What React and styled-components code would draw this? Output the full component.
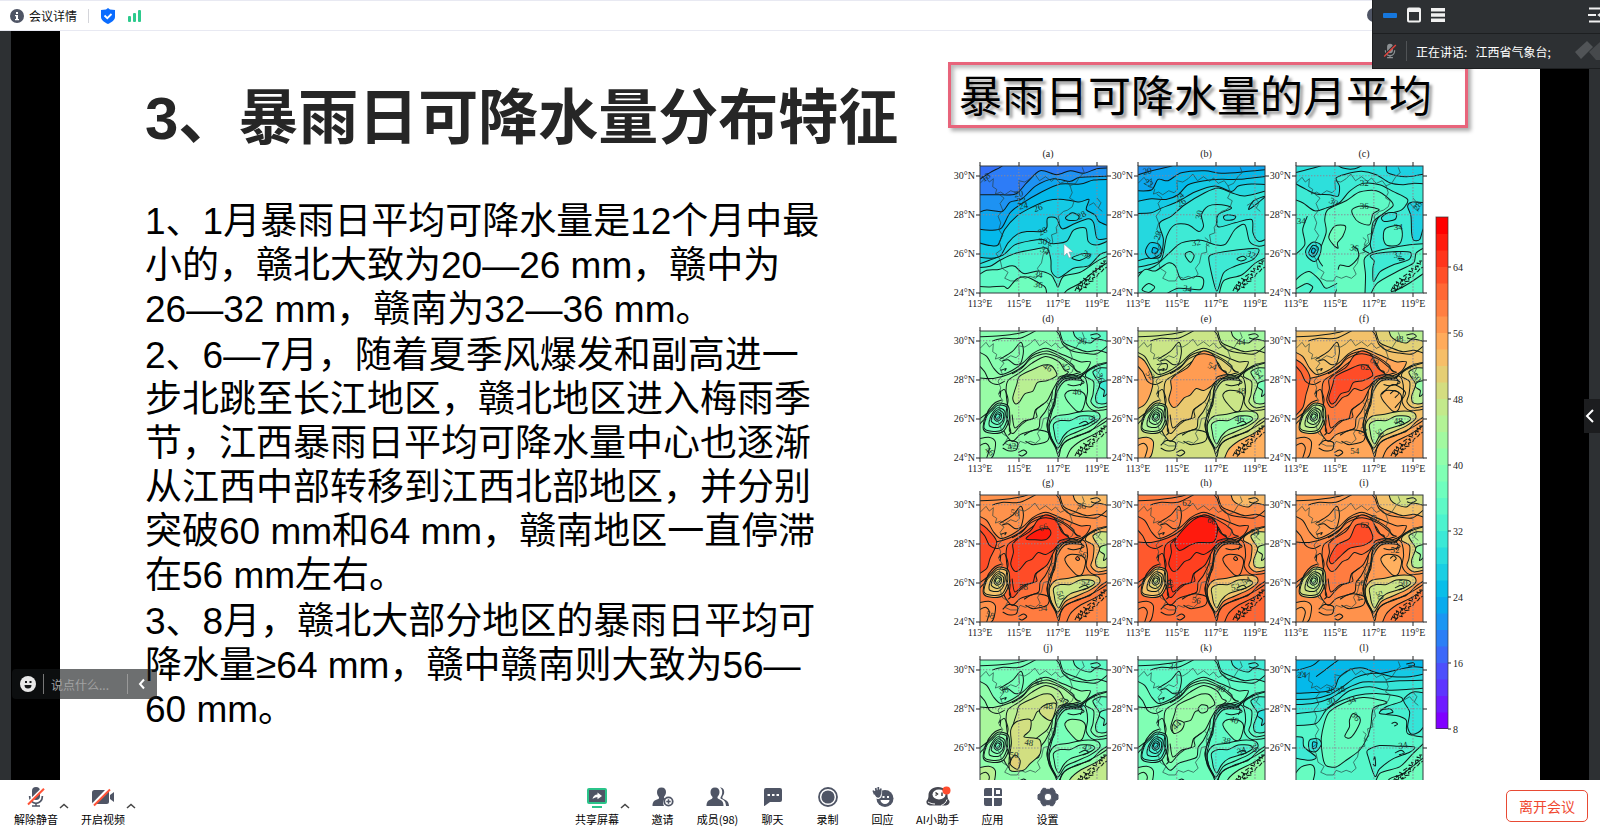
import React from "react";
import styled, { createGlobalStyle } from "styled-components";

const Global = createGlobalStyle`
  * { box-sizing: border-box; }
  body { margin: 0; background: #fff; font-family: "Liberation Sans", "Noto Sans CJK SC", sans-serif; }
  button, input { font: inherit; color: inherit; }
`;

const ui = `"Noto Sans CJK SC", sans-serif`;
const ink = "#4f5565";

const App_ = styled.div`
  position: relative;
  display: flex;
  flex-direction: column;
  height: 100vh;
  overflow: hidden;
  font-family: ${ui};
`;

const Header = styled.header`
  flex: none;
  display: flex;
  align-items: center;
  height: 31px;
  padding: 0 9px;
  border-top: 1px solid #e8e9f2;
  border-bottom: 1px solid #e8e9f2;
  font-size: 12px;
  color: #111;
`;

const PlainButton = styled.button`
  display: flex;
  align-items: center;
  justify-content: center;
  gap: 4px;
  padding: 0;
  border: 0;
  background: none;
  cursor: pointer;
`;

const Rule = styled.span`
  width: 1px;
  height: ${(p) => p.$h}px;
  margin: 0 ${(p) => p.$gap}px;
  background: ${(p) => p.$color};
`;

const HeaderIcons = styled.div`
  display: flex;
  align-items: center;
  gap: 12px;
`;

const HiddenInfo = styled.span`
  position: absolute;
  top: 8px;
  right: 219px;
  width: 14px;
  height: 14px;
  border-radius: 50%;
  background: ${ink};
`;

const Stage = styled.main`
  position: relative;
  flex: 1;
  min-height: 0;
  display: flex;
  padding: 0 11px;
  background: #2d3033;
`;

const Letterbox = styled.div`
  flex: 1;
  min-width: 0;
  display: flex;
  padding: 0 49px;
  background: #000;
`;

const Slide = styled.article`
  flex: 1;
  min-width: 0;
  display: grid;
  grid-template-columns: 3fr 2fr;
  overflow: hidden;
  background: #fff;
`;

const Notes = styled.section`
  padding: 44px 0 0 85px;
  color: #000;
`;

const Title = styled.h1`
  margin: 0;
  font: 700 60px/88px "Liberation Sans", "Noto Sans CJK SC", sans-serif;
  color: #262626;
  white-space: nowrap;
`;

const Points = styled.div`
  display: flex;
  flex-direction: column;
  gap: 2px;
  margin-top: 37px;
  font: 37px/44px "Liberation Sans", "Noto Sans CJK SC", sans-serif;
`;

const Point = styled.p`
  margin: 0;
  white-space: pre;
`;

const Figure = styled.figure`
  margin: 31px 0 0;
`;

const Caption = styled.figcaption`
  width: fit-content;
  height: 66px;
  padding: 0 33px 0 8px;
  border: 3px solid #e8647b;
  box-shadow: 3px 3px 4px #0005, inset 3px 3px 4px #0004;
  font-size: 43px;
  line-height: 56px;
  color: #000;
  text-shadow: 3px 3px 3px #0006;
  white-space: nowrap;
`;

const Chart = styled.svg`
  display: block;
  width: 100%;
  margin-top: 11px;
  font-family: "Liberation Serif", serif;
`;

const ChatBar = styled.form`
  position: absolute;
  left: 12px;
  bottom: 81px;
  display: flex;
  align-items: center;
  width: 145px;
  height: 30px;
  padding: 0 9px 0 8px;
  border-radius: 4px 0 0 4px;
  background: rgba(20, 22, 24, 0.62);
  font-size: 12px;
`;

const ChatInput = styled.input`
  flex: 1;
  min-width: 0;
  padding: 0;
  border: 0;
  outline: 0;
  background: none;
  color: #fff;
  &::placeholder { color: #a2a2a2; }
`;

const SideHandle = styled(PlainButton)`
  position: absolute;
  right: 0;
  top: 368px;
  width: 16px;
  height: 34px;
  padding-right: 4px;
  background: #1c1d1f;
`;

const Toolbar = styled.footer`
  flex: none;
  display: grid;
  grid-template-columns: 1fr auto 1fr;
  height: 52px;
  padding: 0 12px 0 13px;
  background: #fff;
  font-size: 11px;
  color: #000;
`;

const Group = styled.div`
  display: flex;
  align-items: flex-start;
  padding-left: ${(p) => p.$indent || 0}px;
`;

const Pair = styled.div`
  display: flex;
  margin-right: ${(p) => p.$gap}px;
`;

const Tool = styled.button`
  display: flex;
  flex-direction: column;
  align-items: center;
  gap: 3px;
  width: ${(p) => p.$w || 55}px;
  height: 52px;
  padding: 6px 0 0;
  border: 0;
  background: none;
  line-height: 16px;
  white-space: nowrap;
  cursor: pointer;
`;

const Caret = styled(PlainButton)`
  width: 10px;
  height: 52px;
`;

const Leave = styled.button`
  justify-self: end;
  width: 82px;
  height: 32px;
  margin-top: 10px;
  padding: 0;
  border: 1px solid #e84a34;
  border-radius: 5px;
  background: #fff;
  color: #f0482f;
  font-size: 14px;
  line-height: 20px;
  cursor: pointer;
`;

const Speaker = styled.aside`
  position: absolute;
  top: 0;
  right: 0;
  width: 228px;
  height: 69px;
  overflow: hidden;
  border: solid #1d1f21;
  border-width: 0 0 1px 1px;
  background: #2d3033;
  color: #fff;
  font-size: 12px;
`;

const SpeakerTop = styled.div`
  display: flex;
  align-items: center;
  gap: 10px;
  height: 34px;
  padding: 0 0 4px 10px;
  border-bottom: 1px solid #1d1f21;
`;

const Spacer = styled.span`
  flex: 1;
`;

const SpeakerRow = styled.div`
  display: flex;
  align-items: center;
  height: 34px;
  padding-left: 10px;
  white-space: pre;
`;

/* ---------- precipitable water charts ---------- */

const LOW = 8;
const HIGH = 70;

function tone(v) {
  const x = Math.max(0, Math.min(1, (v - LOW) / (HIGH - LOW)));
  const ch = (n) => Math.round(255 * Math.max(0, Math.min(1, n)));
  return `rgb(${ch(Math.abs(2 * x - 0.5))},${ch(Math.sin(Math.PI * x))},${ch(Math.cos((Math.PI * x) / 2))})`;
}

const parse = (s) => s.trim().split(/\s+/).map((p) => p.split(",").map(Number));

function smooth(s, closed) {
  const p = parse(s);
  const n = p.length;
  const at = (i) => (closed ? p[(i + n) % n] : p[Math.max(0, Math.min(n - 1, i))]);
  let d = `M${p[0]}`;
  for (let i = 0; i < (closed ? n : n - 1); i++) {
    const [a, b, c, e] = [at(i - 1), at(i), at(i + 1), at(i + 2)];
    const k = 7;
    d += `C${b[0] + (c[0] - a[0]) / k},${b[1] + (c[1] - a[1]) / k} ${c[0] - (e[0] - b[0]) / k},${c[1] - (e[1] - b[1]) / k} ${c}`;
  }
  return closed ? d + "Z" : d;
}

/* a band is [value, line, corners]; corners "z" closes the loop, none leaves a bare line */
function Band({ band: [value, line, corners] }) {
  const closed = corners === "z";
  const d = smooth(line, closed);
  return (
    <>
      {value != null && <path d={closed ? d : `${d}L${corners.replace(/ /g, "L")}Z`} fill={tone(value)} />}
      <path d={d} fill="none" stroke="#0d1a1a" strokeWidth="3" />
    </>
  );
}

const S = "400,400 -20,400";

const BORDER =
  "0,52 18,34 28,48 40,38 38,62 50,70 46,84 62,78 74,86 92,74 108,80 118,70 116,44 134,48 150,38 164,24 178,44 196,32 214,46 226,36 240,52 258,44 270,60 276,80 268,96 282,104 276,122 262,132 250,136 234,150 238,168 228,184 230,200 214,206 218,228 204,240 206,258 190,262 184,290 172,306 180,324 166,336 150,330 136,336 120,330 112,344 92,344 74,336 84,318 66,306 60,280 48,262 64,250 58,226 68,208 56,190 62,170 54,150 68,132 60,112 72,96 56,84";
const LAKES = "200,214 210,222 204,236 214,240 M268,60 286,52 300,30 312,20 306,4 M326,118 340,110 352,124 M350,96 362,110 354,126 366,136";
const COAST = [
  "284,374 290,362 296,368 292,354 304,360 300,346 312,352 316,342 310,336 324,344 330,332 322,330 334,322 342,328 338,314 350,318 346,306 360,310 356,298 366,302 362,290 374,294 370,284 382,284",
  "296,376 308,362 318,364 314,356 328,352 326,346 340,344 336,336 350,330 354,322 364,316 372,306 382,302",
  "290,366 302,370 308,350 320,356 318,340 332,340",
];

const SHAPE = {
  nw: ["-10,60 20,76 40,110 62,130 96,118 130,94 160,66 200,52 250,72 300,92 330,92 316,120 290,134 262,136 236,150 226,180 224,220 204,262 206,310 226,350 236,376 246,340 284,316 330,300 360,272 394,250", S],
  mid: ["-10,140 40,142 90,128 130,104 156,74 200,60 240,76 276,100 286,118 300,124 272,132 244,140 220,158 214,200 196,240 180,262 176,290 150,300 120,310 96,330 72,300 66,262 56,222 30,240 -10,270", "-20,270"],
  tongue: ["88,298 90,262 82,220 78,178 84,148 120,124 156,96 196,76 236,92 252,116 264,124 236,146 218,176 200,210 168,236 170,258 144,266 118,286 100,306", "z"],
  core: ["106,218 98,200 110,160 118,136 156,116 190,102 214,104 230,132 202,148 172,154 158,180 134,188 118,212", "z"],
  ne: ["236,-10 250,34 284,50 320,62 356,58 392,70", "400,-20"],
  ne2: ["276,-10 284,16 300,28 330,36 350,24 392,34", "400,-20"],
  e1: ["392,92 352,100 326,116 316,136 340,152 338,190 332,212 352,230 392,222", "400,220 400,90"],
  e2: ["392,112 362,110 338,122 346,140 358,160 346,196 352,216 378,216 392,196", "400,200 400,110"],
  e3: ["386,150 362,154 358,168 372,178 370,196 388,178", "z"],
  pocket: ["254,190 270,178 304,182 316,200 306,236 290,240 270,220 258,204", "z"],
  se1: ["208,280 226,256 260,250 312,240 352,244 358,262 330,284 290,302 256,318 234,350 222,336 210,310", "z"],
  se2: ["222,300 220,280 240,268 270,268 300,254 336,256 342,266 318,280 270,296 250,314 236,338 226,322", "z"],
  coast: ["252,400 270,356 300,330 344,308 392,276", "400,400"],
  sw: ["-10,324 26,318 46,332 40,372 20,392", "-20,400"],
};

const WIDE_CORE =
  "104,228 92,206 100,172 98,148 112,132 150,108 172,76 196,60 226,72 244,110 268,132 236,148 220,164 196,178 174,172 156,192 138,200 118,224";

const VORTEX = [
  "54,216 84,224 88,262 70,300 34,306 10,294 16,256 34,234",
  "54,222 80,228 82,262 66,296 34,300 12,290 20,256 36,238",
  "52,230 74,240 72,268 56,288 28,284 32,256",
  "54,236 70,246 68,268 52,280 34,270 40,250",
  "52,242 64,250 62,264 50,270 42,260",
  "52,248 60,252 58,260 50,264 46,258",
];

const LINES = [
  "96,128 124,112 154,82 198,68 246,84 282,112 292,122",
  "-10,96 14,122 28,150 52,160 74,150",
  "60,84 96,62 122,34 130,60 122,96 104,100 84,86 66,90",
  "36,30 70,22 120,22 176,-6",
  "-10,18 60,14 130,4 160,-10",
  "132,312 152,300 176,296 206,306 200,330 160,340 136,330",
  "68,342 86,328 112,334 108,356 84,358 68,350",
  "114,364 130,356 140,364 126,374 116,370",
  "-10,348 16,336 28,350 20,380",
  "234,366 256,330 300,312 352,286 392,260",
  "226,344 210,316 200,282 210,244 222,210 230,170 252,144 290,138",
  "232,356 214,322 206,282 216,240 232,180 256,148 296,142 330,112 392,92",
  "240,156 250,144 286,142 306,134 318,148 322,180 318,214 340,238 392,232",
  "256,150 268,146 304,148 310,156 280,164 262,160",
  "330,12 350,8 360,16 344,24 332,20",
  "296,278 314,270 324,278 308,284",
  "56,188 62,180 60,198",
  "62,118 78,112 74,120",
  "392,36 350,68 310,66 276,60 248,40 236,10 220,-10",
  "64,180 74,176 84,206 78,250 92,300 84,312",
  "96,250 104,290 130,270 158,262 166,236 190,218",
  "-10,288 14,262 26,236 46,214 66,206",
  "232,146 240,136 274,130 300,140 308,128",
  "300,164 306,150 300,138 320,122 350,104",
];

const HEAT = ["nw", "mid", "tongue", "core", "ne", "ne2", "e1", "e2", "e3", "pocket", "se1", "se2", "coast", "sw"];

function heat(base, values, vortex, extra = [], skip = []) {
  return {
    base,
    bands: [
      ...HEAT.map((k, i) => [values[i], ...SHAPE[k]]),
      ...VORTEX.map((v, i) => [vortex - i, v, "z"]),
      ...extra,
      ...LINES.filter((_, i) => !skip.includes(i)).map((l) => [null, l]),
    ],
  };
}

const MAPS = [
  {
    name: "a",
    base: 17,
    bands: [
      [18, "-10,46 30,20 60,4 80,-10", "400,-10 400,400 -20,400"],
      [20, "-10,86 50,86 106,84 140,50 180,14 230,26 270,14 310,22 350,8 392,6", S],
      [22, "-10,142 20,132 66,136 90,108 126,98 166,60 220,38 270,46 300,34 392,30", S],
      [24, "-10,188 30,192 64,186 90,140 126,112 180,80 240,54 300,54 340,42 392,40", S],
      [26, "-10,228 30,238 54,236 74,190 110,150 150,126 200,104 250,100 296,108 326,100 318,130 344,146 356,166 392,182", S],
      [28, "-10,272 30,276 60,270 84,230 112,204 140,196 184,196 200,184 202,156 228,156 246,188 284,172 324,158 340,170 350,216 376,218 392,206", S],
      [30, "-10,296 28,282 70,266 104,236 150,224 188,220 212,232 258,226 280,192 316,186 324,226 352,236 392,220", S],
      [33, "-10,304 30,300 60,282 104,262 160,250 200,246 212,280 214,316 236,334 280,306 326,298 360,264 392,254", S],
      [35, "-10,330 20,312 56,310 86,300 104,300 132,322 176,314 212,326 226,348 234,362 250,330 300,318 352,284 392,266", S],
      [37, "-10,360 30,362 70,360 84,366 110,338 140,332 176,350 196,364 200,392", "-20,400"],
      [36, "246,392 260,372 300,350 344,314 392,282", "400,400"],
      [27, "256,154 276,140 296,150 290,162 264,162", "z"],
      [31, "276,274 310,262 330,266 300,282 284,280", "z"],
    ],
    labels: [["18", 18, 34, -35], ["20", 116, 84, -10], ["22", 124, 104, -10], ["24", 130, 120, -10], ["26", 174, 126, -20], ["28", 188, 196, -30], ["30", 188, 226, 5], ["34", 194, 254, 30], ["34", 174, 326, 10], ["36", 174, 356, 10], ["30", 320, 266, 30], ["28", 304, 148, -30]],
    cursor: true,
  },
  {
    name: "b",
    base: 20,
    bands: [
      [22, "-10,30 20,20 50,12 100,0 120,-10", "400,-10 400,400 -20,400"],
      [24, "-10,74 40,72 60,40 90,44 130,20 200,14 250,22 330,16 392,10", S],
      [26, "-10,108 40,98 84,100 120,86 150,56 200,44 250,40 300,40 392,30", S],
      [28, "-10,142 40,140 70,126 120,106 170,78 230,60 280,76 300,60 340,54 392,56", S],
      [30, "-10,286 30,276 66,272 76,220 64,172 100,150 140,116 200,80 240,66 280,80 320,90 392,72", S],
      [31, "-10,304 30,296 70,280 86,210 110,176 150,176 182,196 196,180 190,146 210,120 250,116 280,126 240,146 240,182 290,170 340,160 344,200 362,226 392,214", S],
      [32, "-10,324 50,300 94,260 130,230 188,222 232,236 262,234 290,190 320,176 334,226 362,240 392,232", S],
      [34, "-10,344 20,310 52,314 90,290 112,300 130,340 176,330 196,340 186,370 120,366 70,392", "-20,400"],
      [31, "218,312 212,272 230,262 290,252 360,248 344,280 290,300 256,320 236,374", "z"],
      [34, "240,400 256,344 310,326 352,290 392,270", "400,400"],
      [26, "36,230 62,234 70,256 58,270 36,276 22,256", "z"],
      [24, "46,244 60,250 54,262 42,258", "z"],
      [29, "256,152 270,146 292,150 286,160 262,162", "z"],
      [29, "332,130 346,104 380,92", "z"],
      [33, "142,262 156,256 168,268 158,288 144,274", "z"],
      [33, "296,278 314,270 324,278 308,284", "z"],
      [34, "12,370 30,352 50,362 34,378", "z"],
    ],
    labels: [["20", 28, 16, -10], ["22", 32, 52, 30], ["24", 124, 92, -40], ["26", 130, 110, -35], ["30", 184, 146, -80], ["28", 60, 208, -75], ["32", 174, 230, -10], ["32", 338, 266, 20], ["34", 148, 368, 10]],
  },
  {
    name: "c",
    base: 29,
    bands: [
      [31, "-10,48 30,70 60,84 100,86 126,90 130,60 120,36 150,24 196,16 240,26 280,50 320,56 350,52 392,54", S],
      [33, "-10,98 20,110 56,134 90,126 130,110 160,76 200,52 250,56 290,76 334,100 318,130 290,140 256,146 240,166 222,230 230,268 206,290 208,326 226,360 250,326 300,300 350,270 392,244", S],
      [35, "80,300 66,270 90,200 86,160 96,130 150,104 190,78 240,74 280,100 290,120 256,146 230,170 222,230 200,250 220,264 208,296 206,330 214,392 120,392 130,350 90,366 70,340 40,316 16,326 -10,350", "-20,400"],
      [37, "126,246 124,230 140,210 148,180 116,180 98,212 112,236", "z"],
      [36, "168,130 196,120 248,130 230,144 220,176 188,168 172,150", "z"],
      [36, "126,310 132,296 160,300 186,274 184,250 170,240", "392,400 120,400"],
      [33, "206,392 208,326 204,280 222,262 260,250 340,236 392,232", "400,230 400,400"],
      [31, "230,306 234,284 222,270 240,262 300,256 342,258 338,280 290,296 252,316 232,346", "z"],
      [35, "220,392 244,350 310,312 352,290 360,260 392,240", "400,400"],
      [27, "392,110 350,108 334,120 344,150 346,200 352,222 370,220 380,190 392,180", "400,170"],
      [34, "264,192 280,182 312,180 318,210 306,236 274,238 262,220", "z"],
      [30, "256,154 276,140 300,142 296,160 264,166", "z"],
      [30, "50,228 74,236 72,264 56,286 34,272 30,250", "z"],
      [28, "50,238 66,244 62,262 50,272 38,260", "z"],
      [25, "50,246 58,250 54,262 46,258", "z"],
      [27, "272,-10 274,20 330,32 392,22", "400,-20"],
      [null, "-10,22 60,4 100,-10"],
      [null, "114,-10 140,6 176,8 214,-10"],
      [null, "-10,272 26,236 20,190 34,150"],
      [null, "304,278 314,276 324,280 308,282"],
      [null, "284,376 300,372 340,350 384,320"],
      [null, "0,368 30,352 50,362 40,380"],
    ],
    labels: [["32", 204, 52, 0], ["30", 112, 108, 30], ["36", 204, 122, 0], ["34", 16, 166, 0], ["34", 306, 182, 0], ["36", 174, 246, 10], ["32", 304, 266, -10], ["28", 364, 120, -60]],
  },
  {
    name: "d",
    ...heat(40, [41, 42, 43, 46, 37, 35, 37, 34, 31, 39, 37, 35, 42, 42], 39),
    labels: [["36", 306, 30, 10], ["46", 202, 110, 30], ["40", 290, 182, 0], ["42", 96, 346, -10], ["46", 28, 360, 40], ["42", 256, 108, 60], ["36", 360, 140, 70], ["38", 338, 266, 60]],
  },
  {
    name: "e",
    ...heat(48, [49, 51, 52, 57, 46, 43, 46, 42, 38, 48, 45, 41, 55, 55], 46, [[57, WIDE_CORE, "z"], [56, "-10,70 20,90 44,140 40,180 20,220 -10,236", "-20,200"], [null, "56,100 86,98 84,116 58,116"]]),
    labels: [["44", 308, 34, 0], ["52", 36, 132, 50], ["54", 222, 106, 20], ["48", 308, 180, 0], ["46", 304, 264, 0], ["54", 362, 130, 60]],
  },
  {
    name: "f",
    ...heat(53, [56, 58, 60, 63, 51, 46, 52, 46, 42, 54, 49, 44, 57, 57], 48, [[62, WIDE_CORE, "z"], [64, ...SHAPE.core.slice(0, 1), "z"], [62, "-10,80 20,100 42,140 30,190 20,230 -10,262", "-20,200"], [null, "282,188 294,178 308,186 296,200"], [null, "256,190 290,160 328,186 296,230"]]),
    labels: [["48", 308, 26, 0], ["60", 234, 92, 30], ["62", 206, 108, 0], ["52", 200, 300, -60], ["48", 306, 270, 0], ["50", 250, 306, 60], ["54", 176, 360, 0], ["50", 360, 140, 50]],
  },
  {
    name: "g",
    ...heat(58, [60, 61, 64, 66, 57, 54, 54, 48, 45, 57, 52, 48, 59, 58], 54, [[65, WIDE_CORE, "z"], [64, "-10,80 20,100 50,140 30,190 20,220 -10,240", "-20,200"], [68, "138,130 170,106 204,100 212,116 196,134 160,134", "z"], [61, "286,190 292,184 298,192 292,196", "z"]]),
    labels: [["56", 304, 34, 0], ["58", 104, 54, 10], ["66", 190, 98, -20], ["62", 236, 78, 30], ["56", 306, 178, 20], ["58", 130, 276, 0], ["54", 188, 338, 0], ["58", 30, 360, 20], ["50", 240, 300, 70], ["52", 316, 262, 0]],
  },
  {
    name: "h",
    ...heat(60, [61, 63, 65, 66, 58, 54, 54, 48, 46, 60, 53, 50, 62, 60], 54, [[66, WIDE_CORE, "z"], [68, "124,166 110,140 130,110 164,76 190,64 226,74 238,100 226,140 180,142 156,150", "z"], [61, "286,190 292,184 298,192 292,196", "z"]], [0]),
    labels: [["62", 146, 26, 0], ["66", 220, 78, 20], ["60", 94, 266, 80], ["56", 174, 316, 10], ["52", 292, 276, -10], ["54", 324, 258, -30], ["54", 350, 112, 0]],
  },
  {
    name: "i",
    ...heat(57, [58, 59, 60, 63, 53, 49, 51, 45, 42, 55, 51, 48, 60, 57], 50, [[61, WIDE_CORE, "z"], [64, "108,206 100,190 122,150 160,130 180,90 214,92 230,130 204,150 160,160 130,186", "z"], [null, "282,190 292,182 300,190 292,198"]]),
    labels: [["60", 236, 72, 40], ["62", 206, 90, 0], ["52", 296, 166, 0], ["56", 192, 264, 0], ["54", 190, 304, 80], ["50", 320, 264, 0], ["50", 250, 300, 70]],
  },
  {
    name: "j",
    ...heat(38, [41, 44, 46, 48, 37, 35, 39, 36, 35, 42, 39, 38, 47, 46], 42, [[49, "88,290 94,250 92,210 110,184 150,178 150,210 132,230 178,238 180,280 150,310 130,330 90,330", "z"], [51, "90,306 104,284 120,300 114,326 96,318", "z"], [49, "178,150 196,134 228,132 214,180 188,168", "z"]], [5, 6, 20]),
    labels: [["42", 176, 64, -20], ["38", 72, 90, -10], ["46", 248, 122, 30], ["48", 204, 138, 0], ["44", 296, 134, 10], ["48", 146, 248, 10], ["50", 102, 284, 0], ["42", 320, 264, 20]],
  },
  {
    name: "k",
    ...heat(35, [37, 39, 41, 42, 33, 31, 35, 32, 29, 38, 35, 33, 41, 40], 35, [[41, "180,146 190,134 208,138 206,154 188,158", "z"], [43, "102,200 114,180 138,188 130,210 108,220", "z"]], [5, 6]),
    labels: [["34", 106, 18, 0], ["36", 120, 102, -20], ["40", 248, 86, 20], ["44", 116, 196, -45], ["40", 288, 180, 20], ["38", 264, 242, 10], ["34", 310, 272, -20], ["36", 348, 262, 60]],
  },
  {
    name: "l",
    base: 24,
    bands: [
      [26, "-10,100 40,98 90,94 116,84 128,54 160,30 200,24 250,40 300,30 350,20 392,24", S],
      [28, "-10,118 50,116 100,104 140,80 180,52 240,40 290,50 340,50 392,40", S],
      [30, "-10,134 50,130 100,116 150,86 200,66 260,66 310,62 392,60", S],
      [32, "-10,162 40,156 84,150 120,124 160,92 220,80 270,90 330,88 392,84", S],
      [34, "-10,196 60,190 90,150 130,124 180,106 240,100 310,110 316,124 270,140 250,160 300,166 330,180 334,220 392,232", S],
      [36, "80,290 76,230 96,160 140,130 200,112 262,122 270,130 232,144 224,196 214,230 190,270 150,300 120,320 90,316", "z"],
      [37, "146,228 160,200 160,180 172,160 192,176 186,200 164,232", "z"],
      [30, "392,100 350,96 322,120 340,156 334,200 346,222 370,214 392,186", "400,100"],
      [31, "-10,230 20,232 24,260 60,290 40,300 -10,292", "-20,260"],
      [30, "40,240 66,236 76,252 60,274 40,270", "z"],
      [27, "50,246 62,248 60,262 50,264", "z"],
      [33, "216,290 214,270 250,256 300,258 354,260 340,276 290,296 250,326 236,348", "z"],
      [36, "228,400 250,340 310,320 350,280 392,240", "400,400"],
      [37, "252,400 280,356 320,340 392,284", "400,400"],
      [null, "232,300 236,290 238,316 230,312"],
      [null, "286,190 296,186 304,192 294,198"],
      [null, "296,278 314,270 324,278 308,284"],
      [null, "252,150 280,146 290,156 270,162"],
      [36, "-10,350 16,320 48,314 56,340 40,400", "-20,400"],
      [null, "-10,34 50,16 80,-10"],
      [null, "60,50 100,20 140,-10"],
      [null, "330,12 350,8 354,16 336,18"],
    ],
    labels: [["24", 18, 46, 0], ["26", 104, 92, 0], ["28", 134, 90, -20], ["30", 104, 124, -10], ["34", 166, 122, -20], ["36", 178, 170, 50], ["34", 320, 256, -10], ["36", 134, 336, 10]],
  },
];

const SIZE = 127;
const TICKS = [0, 39, 78, 117];

/* the last row runs off the slide, so it carries no bottom axis */
function MapPanel({ map, index }) {
  const row = Math.floor(index / 3);
  const last = row === 3;
  const x = 32 + (index % 3) * 158;
  const y = Math.round(27 + row * 164.5);
  return (
    <g transform={`translate(${x} ${y})`} fontSize="10" textAnchor="middle">
      <clipPath id={`clip-${map.name}`}>
        <rect width="380" height="380" />
      </clipPath>
      <g transform="scale(.3342)">
        <g clipPath={`url(#clip-${map.name})`} strokeLinejoin="round">
          <rect width="380" height="380" fill={tone(map.base)} />
          {map.bands.map((b, i) => (
            <Band key={i} band={b} />
          ))}
          <path d={`M${BORDER} M${LAKES}`} fill="none" stroke="#24413f" strokeWidth="2" />
          {COAST.map((c) => (
            <path key={c} d={`M${c}`} fill="none" stroke="#101a18" strokeWidth="3" strokeDasharray="15 4" />
          ))}
          <path d="M116,0V380M233,0V380M350,0V380M0,29H380M0,146H380M0,263H380" stroke="#8b8796" strokeWidth="3" strokeDasharray="4 5" />
          <g fontSize="27" fill="#16302e">
            {map.labels
              .filter(([, , ly]) => !last || ly < 330)
              .map(([t, lx, ly, r], i) => (
                <text key={i} transform={`translate(${lx} ${ly}) rotate(${r})`} y="8">
                  {t}
                </text>
              ))}
          </g>
        </g>
      </g>
      <rect width={SIZE} height={SIZE} fill="none" stroke="#333b40" />
      {TICKS.map((t, i) => (
        <g key={t} fill="#222">
          <path d={`M${t},-4v4M${t},127v4M-4,${127 - t}h4M127,${127 - t}h4`} stroke="#222" />
          {!last && <text x={t} y="141">{`${113 + i * 2}°E`}</text>}
          {!(last && i === 0) && <text x="-5" y={130 - t} textAnchor="end">{`${24 + i * 2}°N`}</text>}
        </g>
      ))}
      <text x="68" y="-9" fill="#222">{`(${map.name})`}</text>
      {map.cursor && <path d="M84,78v12l3,-3 2,5 2,-1 -2,-5h4z" fill="#fff" stroke="#889" strokeWidth=".5" />}
    </g>
  );
}

function ColorScale() {
  const bands = Array.from({ length: 31 }, (_, i) => i);
  return (
    <g transform="translate(488 78)">
      {bands.map((i) => (
        <rect key={i} width="12" height="17" y={(30 - i) * 16.5} fill={tone(LOW + (i / 30) * 62)} />
      ))}
      <rect width="12" height="511.5" fill="none" stroke="#333" strokeOpacity=".7" />
      {[64, 56, 48, 40, 32, 24, 16, 8].map((v) => (
        <g key={v} transform={`translate(12 ${Math.round((HIGH - v) * 8.25)})`}>
          <path d="M0,0h3" stroke="#222" />
          <text x="5" y="4" fontSize="10" fill="#222">
            {v}
          </text>
        </g>
      ))}
    </g>
  );
}

/* ---------- icons ---------- */

const Icon = ({ w = 22, h = 22, box, children }) => (
  <svg width={w} height={h} viewBox={box || `0 0 ${w} ${h}`} fill={ink} aria-hidden="true">
    {children}
  </svg>
);

const Chevron = ({ d, w = 10, h = 10, color = "#444", sw = 1.5 }) => (
  <svg width={w} height={h} viewBox={`0 0 ${w} ${h}`} aria-hidden="true">
    <path d={d} fill="none" stroke={color} strokeWidth={sw} />
  </svg>
);

const MicShape = ({ fill = ink, slash = "#ff5236", bg = "#fff" }) => (
  <>
    <rect x="7" y="1" width="8" height="13" rx="4" fill={fill} />
    <path d="M4.700,10v1a6.300,6.300 0 0 0 12.600,0v-1M11,17v3M7,20h8" fill="none" stroke={fill} strokeWidth="1.700" />
    <path d="M2.500,17.500 18,2.200" stroke={bg} strokeWidth="2.500" />
    <path d="M3,18.500 19,2.700" stroke={slash} strokeWidth="2" />
  </>
);

const icons = {
  mic: <Icon><MicShape /></Icon>,
  video: (
    <Icon>
      <rect x="0" y="4" width="17" height="14" rx="2.500" />
      <path d="M18,9 22,6v10l-4,-3z" />
      <path d="M1,18.500 17,2" stroke="#fff" strokeWidth="3" />
      <path d="M2,19.500 18,3.500" stroke="#ff5236" strokeWidth="2" />
    </Icon>
  ),
  share: (
    <Icon>
      <rect x="2" y="3" width="18" height="14" rx="1" stroke="#2bc48a" strokeWidth="2" />
      <path d="M6.500,13c.5,-3 2.500,-4.500 5,-4.500v-2l4.500,3.500 -4.500,3.200v-2c-2,0 -3.500,.5 -5,1.800z" fill="#fff" />
      <path d="M6,21h10" stroke="#2bc48a" strokeWidth="2" />
    </Icon>
  ),
  invite: (
    <Icon>
      <path d="M9.500,1.500c3,0 4.500,2 4.500,4.500 0,2.200 -1,3.500 -1.800,4.500 -.5,1 0,1.800 1,2.300A5.800,5.800 0 0 0 12,20H0.500c0,-4 1.500,-5.500 5,-6.700 1.500,-.5 2,-1.500 1.200,-2.600C5.700,9.500 5,8 5,6c0,-2.500 1.500,-4.500 4.500,-4.500z" />
      <circle cx="16.500" cy="15.500" r="4.200" fill="#fff" stroke={ink} strokeWidth="1.800" />
      <path d="M14.300,15.500h4.400M16.500,13.300v4.400" stroke={ink} strokeWidth="1.500" />
    </Icon>
  ),
  members: (
    <Icon w={24} h={22}>
      <path d="M9,1.500c3,0 4.500,2 4.500,4.500 0,2.200 -1,3.500 -1.800,4.500 -.8,1.300 .2,2.200 1.500,2.700 2.800,1 4.300,2.500 4.300,6.800H0.500c0,-4 1.500,-5.700 4.500,-6.800 1.500,-.5 2,-1.500 1.200,-2.700C5.200,9.500 4.500,8 4.500,6c0,-2.500 1.500,-4.500 4.500,-4.500z" />
      <path d="M14,1.500c3,0 4.200,2.200 4.200,4.500 0,2 -.8,3.300 -1.600,4.500 -.8,1.300 .2,2.200 1.400,2.700 2.800,1 4.800,2.500 5,6.800h-3c-.2,-4 -1.500,-5.800 -4.500,-7 -1.200,-.5 -1.300,-1.500 -.5,-2.600 .8,-1.100 1.200,-2.500 1.200,-4.400 0,-2 -.8,-3.700 -2.200,-4.500z" />
    </Icon>
  ),
  chat: (
    <Icon>
      <path d="M4,2h14a2,2 0 0 1 2,2v10a2,2 0 0 1 -2,2H8l-5.500,4c-.4,0 -.5,-.2 -.5,-.6V4a2,2 0 0 1 2,-2z" />
      <path d="M5.500,8h2.500v2h-2.500zM10,8h2.500v2H10zM14.500,8H17v2h-2.500z" fill="#fff" />
    </Icon>
  ),
  record: (
    <Icon>
      <circle cx="11" cy="11" r="9" fill="none" stroke={ink} strokeWidth="1.800" />
      <circle cx="11" cy="11" r="6.600" />
    </Icon>
  ),
  react: (
    <Icon>
      <circle cx="13" cy="12.500" r="8.500" />
      <path d="M1,5.500 2.500,9.500C3.500,12 5,12.500 6.500,12.300 9,12 9.500,9.500 9.500,7V3" fill={ink} stroke="#fff" strokeWidth="1.200" />
      <path d="M1.200,4.500l1.500,4M3.700,2l1,6M6.300,1v7M8.800,2.500l-.3,6" stroke={ink} strokeWidth="1.700" />
      <path d="M8.500,14h9a4.500,4 0 0 1 -9,0zM10.500,10h2v2h-2zM15,10h2v2h-2z" fill="#fff" />
    </Icon>
  ),
  ai: (
    <Icon w={26} h={22}>
      <path d="M13,1c6,0 9.500,4 9.500,8 0,3 .5,4 2,6 .5,3 -2,4 -3.500,4.500H6C3,19.500 1,18 1.500,15c1.500,-1.500 2,-3 2,-6 0,-4 3.500,-8 9.500,-8z" fill="#454750" />
      <path d="M3,16c2,1 4,2 7,2M16,19.500c3,-1 5,-3 6,-6" stroke="#fff" fill="none" />
      <ellipse cx="14" cy="8.500" rx="6.500" ry="5" fill="#fff" />
      <path d="M10.500,6.500l2,1.500 -2,1.500M17,6.500v3.500" fill="none" stroke="#333" strokeWidth="1.400" />
      <circle cx="21.500" cy="4.500" r="4" fill="#ff4c2e" />
    </Icon>
  ),
  apps: (
    <Icon>
      <path d="M4,2h6v8H2V4a2,2 0 0 1 2,-2zM2,12h8v8H4a2,2 0 0 1 -2,-2zM12,12h8v6a2,2 0 0 1 -2,2h-6z" />
      <path d="M13,3h5a1,1 0 0 1 1,1v5h-6z" fill="#fff" stroke={ink} strokeWidth="2" />
    </Icon>
  ),
  settings: (
    <Icon>
      <path
        fillRule="evenodd"
        d="M6,2.300h2.500l1,1h3l1,-1H16l2,3 .2,2 2.800,1.500v4.400l-2.800,1.500 -.2,2 -2,3h-2.500l-1,-1h-3l-1,1H6l-2,-3 -.2,-2L1,13.200V8.800l2.800,-1.500 .2,-2zM11,7.200a3.800,3.800 0 1 0 0,7.600a3.800,3.800 0 1 0 0,-7.600z"
        strokeLinejoin="round"
        stroke={ink}
        strokeWidth="1"
      />
    </Icon>
  ),
};

const TOOLS = [
  ["invite", "邀请"],
  ["members", "成员(98)"],
  ["chat", "聊天"],
  ["record", "录制"],
  ["react", "回应"],
  ["ai", "AI小助手"],
  ["apps", "应用"],
  ["settings", "设置"],
];

const NOTES = [
  "1、1月暴雨日平均可降水量是12个月中最\n小的，赣北大致为20—26 mm，赣中为\n26—32 mm，赣南为32—36 mm。",
  "2、6—7月，随着夏季风爆发和副高进一\n步北跳至长江地区，赣北地区进入梅雨季\n节，江西暴雨日平均可降水量中心也逐渐\n从江西中部转移到江西北部地区，并分别\n突破60 mm和64 mm，赣南地区一直停滞\n在56 mm左右。",
  "3、8月，赣北大部分地区的暴雨日平均可\n降水量≥64 mm，赣中赣南则大致为56—\n60 mm。",
];

function ToolPair({ icon, label, gap }) {
  return (
    <Pair $gap={gap}>
      <Tool type="button" $w={46}>
        {icons[icon]}
        {label}
      </Tool>
      <Caret type="button" aria-label={`${label}选项`}>
        <Chevron d="M1,7 5,3.500 9,7" />
      </Caret>
    </Pair>
  );
}

export default function App() {
  return (
    <App_>
      <Global />
      <Header>
        <PlainButton type="button">
          <Icon w={16} h={16}>
            <circle cx="8" cy="8" r="7" />
            <path d="M7,4h2v2H7zM6,7h3v4h1v1.200H6V11h1V8.200H6z" fill="#fff" />
          </Icon>
          会议详情
        </PlainButton>
        <Rule $h={14} $gap={11} $color="#d4d5da" />
        <HeaderIcons>
          <Icon w={16} h={16}>
            <path d="M8,0l2,1.500 5,.5v7c0,3.500 -4,5.500 -7,7 -3,-1.500 -7,-3.500 -7,-7V2l5,-.5z" fill="#0a6cff" />
            <path d="M4.500,7.500 7.300,10.200 11.500,6" fill="none" stroke="#fff" strokeWidth="1.800" />
          </Icon>
          <Icon w={14} h={14}>
            <rect y="7" width="3" height="6" rx="1" fill="#2dca8d" />
            <rect x="5" y="4" width="3" height="9" rx="1" fill="#2dca8d" />
            <rect x="10" y="1" width="3" height="12" rx="1" fill="#2dca8d" />
          </Icon>
        </HeaderIcons>
      </Header>
      <HiddenInfo />
      <Stage>
        <Letterbox>
          <Slide>
            <Notes>
              <Title>3、暴雨日可降水量分布特征</Title>
              <Points>
                {NOTES.map((n) => (
                  <Point key={n}>{n}</Point>
                ))}
              </Points>
            </Notes>
            <Figure>
              <Caption>暴雨日可降水量的月平均</Caption>
              <Chart viewBox="0 0 592 660" role="img">
                {MAPS.map((m, i) => (
                  <MapPanel key={m.name} map={m} index={i} />
                ))}
                <ColorScale />
              </Chart>
            </Figure>
          </Slide>
        </Letterbox>
        <ChatBar>
          <PlainButton type="button" aria-label="表情">
            <Icon w={16} h={16}>
              <circle cx="8" cy="8" r="8" fill="#e8e8e8" />
              <path d="M4.500,9h7a3.500,3.500 0 0 1 -7,0zM5,5h2v2H5zM9.500,5h2v2h-2z" fill="#151719" />
            </Icon>
          </PlainButton>
          <Rule $h={20} $gap={7} $color="#777" />
          <ChatInput aria-label="聊天消息" placeholder="说点什么..." />
          <Rule $h={20} $gap={8} $color="#999" />
          <PlainButton type="button" aria-label="收起">
            <Chevron w={12} h={12} d="M8,1.500 4,6 8,10.500" color="#fff" sw={2} />
          </PlainButton>
        </ChatBar>
        <SideHandle type="button" aria-label="展开侧栏">
          <Chevron w={10} h={14} d="M8,1 2,7 8,13" color="#fff" sw={2} />
        </SideHandle>
      </Stage>
      <Toolbar>
        <Group>
          <ToolPair icon="mic" label="解除静音" gap={11} />
          <ToolPair icon="video" label="开启视频" gap={0} />
        </Group>
        <Group $indent={48}>
          <ToolPair icon="share" label="共享屏幕" gap={5} />
          {TOOLS.map(([icon, label]) => (
            <Tool key={icon} type="button">
              {icons[icon]}
              {label}
            </Tool>
          ))}
        </Group>
        <Leave type="button">离开会议</Leave>
      </Toolbar>
      <Speaker>
        <SpeakerTop>
          <PlainButton type="button" aria-label="最小化">
            <Icon w={14} h={16}>
              <rect y="6" width="14" height="5" rx="1" fill="#1677dd" />
            </Icon>
          </PlainButton>
          <PlainButton type="button" aria-label="窗口">
            <Icon w={14} h={16}>
              <rect x="1" y="1.500" width="12" height="13" rx="1" fill="none" stroke="#f1f1f1" strokeWidth="2" />
              <path d="M1,3.500h12" stroke="#f1f1f1" strokeWidth="3" />
            </Icon>
          </PlainButton>
          <PlainButton type="button" aria-label="列表">
            <Icon w={14} h={16}>
              <path d="M0,1h14v3.500H0zM0,6.300h14v3.500H0zM0,11.600h14v3.500H0z" fill="#f1f1f1" />
            </Icon>
          </PlainButton>
          <Spacer />
          <PlainButton type="button" aria-label="布局">
            <Icon w={12} h={16}>
              <path d="M1,1.500h14M0,8h8M1,14.500h14M15,5l-4,3 4,3" fill="none" stroke="#f1f1f1" strokeWidth="2" />
            </Icon>
          </PlainButton>
        </SpeakerTop>
        <SpeakerRow>
          <Icon w={14} h={16} box="2 0 18 22">
            <MicShape fill="#8c9093" slash="#e0443e" bg="#2d3033" />
          </Icon>
          <Rule $h={20} $gap={9} $color="#505356" />
          {"正在讲话:   江西省气象台;"}
          <Spacer />
          <Icon w={25} h={24}>
            <path d="M0,13 12,2l6,6L6,20z" fill="#515457" />
            <path d="M14,13 26,2v19l-5,0z" fill="#46494c" />
          </Icon>
        </SpeakerRow>
      </Speaker>
    </App_>
  );
}
